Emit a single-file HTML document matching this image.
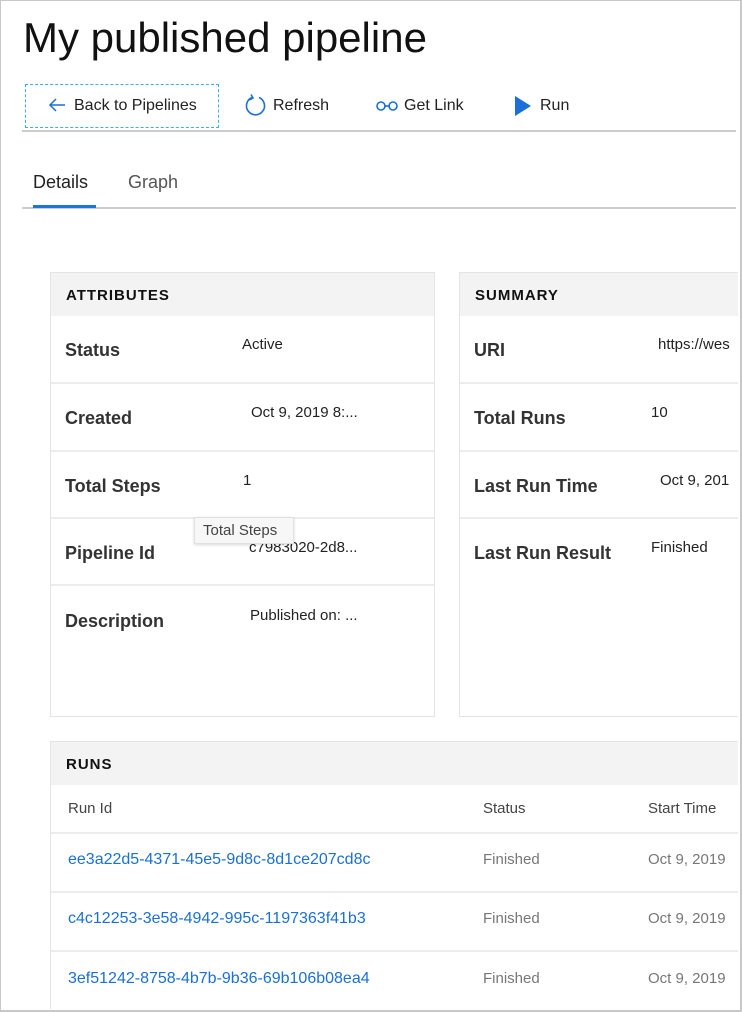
<!DOCTYPE html>
<html><head><meta charset="utf-8"><style>
*{margin:0;padding:0;box-sizing:border-box}
body{width:742px;height:1012px;overflow:hidden;background:#fff;font-family:"Liberation Sans",sans-serif;position:relative}
.a{position:absolute;white-space:nowrap}
.frame{position:absolute;left:0;top:0;width:742px;height:1012px;border:1px solid #c8c8c8;border-right:2px solid #c8c8c8;border-bottom:2px solid #c8c8c8}
.card{position:absolute;border:1px solid #e4e4e4;background:#fff}
.hd{position:absolute;left:0;right:0;top:0;height:43px;background:#f3f3f3;font-weight:bold;font-size:15px;letter-spacing:1px;color:#111;padding:14px 0 0 15px}
.sep{position:absolute;left:0;right:0;height:2px;background:#ececec}
.lbl{font-weight:bold;font-size:18px;color:#333}
.val{font-size:15px;color:#222}
.tb{font-size:16px;color:#222}
.lnk{font-size:16px;color:#1a6fd8}
.gr{font-size:15px;color:#777}
</style></head><body>
<div class="a" style="left:23px;top:14px;font-size:42px;color:#111">My published pipeline</div>

<div class="a" style="left:25px;top:84px;width:194px;height:44px;border:1px dashed #3ab0e8"></div>
<svg class="a" style="left:47px;top:97px" width="20" height="16" viewBox="0 0 20 16"><path d="M18 8H3M9 2L3 8l6 6" fill="none" stroke="#1a6fd8" stroke-width="1.5"/></svg>
<div class="a tb" style="left:74px;top:97px">Back to Pipelines</div>
<svg class="a" style="left:243px;top:93px" width="25" height="26" viewBox="0 0 25 26"><path d="M9 4.5A9 9 0 1 0 16 4.5" fill="none" stroke="#1a6fd8" stroke-width="1.6"/><path d="M8 1.5L10 5 6.5 7" fill="none" stroke="#1a6fd8" stroke-width="1.5"/></svg>
<div class="a tb" style="left:273px;top:97px">Refresh</div>
<svg class="a" style="left:375px;top:100px" width="25" height="12" viewBox="0 0 25 12"><circle cx="6" cy="6" r="4" fill="none" stroke="#1a6fd8" stroke-width="1.6"/><circle cx="18" cy="6" r="4" fill="none" stroke="#1a6fd8" stroke-width="1.6"/><path d="M9 6h6" stroke="#1a6fd8" stroke-width="1.6"/></svg>
<div class="a tb" style="left:404px;top:97px">Get Link</div>
<svg class="a" style="left:514px;top:95px" width="18" height="22" viewBox="0 0 18 22"><path d="M1 1L17 11 1 21z" fill="#1a6fd8"/></svg>
<div class="a tb" style="left:540px;top:97px">Run</div>
<div class="a" style="left:22px;top:130px;width:714px;height:2px;background:#ccc"></div>

<div class="a" style="left:33px;top:172px;font-size:18px;color:#222">Details</div>
<div class="a" style="left:128px;top:172px;font-size:18px;color:#555">Graph</div>
<div class="a" style="left:22px;top:207px;width:714px;height:2px;background:#ccc"></div>
<div class="a" style="left:33px;top:205px;width:63px;height:3px;background:#1a78d4"></div>

<div class="card" style="left:50px;top:272px;width:385px;height:445px">
<div class="hd">ATTRIBUTES</div>
<div class="sep" style="top:109px"></div><div class="sep" style="top:177px"></div><div class="sep" style="top:244px"></div><div class="sep" style="top:311px"></div>
<div class="a lbl" style="left:14px;top:67px">Status</div><div class="a val" style="left:191px;top:63px">Active</div>
<div class="a lbl" style="left:14px;top:135px">Created</div><div class="a val" style="left:200px;top:131px">Oct 9, 2019 8:...</div>
<div class="a lbl" style="left:14px;top:203px">Total Steps</div><div class="a val" style="left:192px;top:199px">1</div>
<div class="a lbl" style="left:14px;top:270px">Pipeline Id</div><div class="a val" style="left:198px;top:266px">c7983020-2d8...</div>
<div class="a lbl" style="left:14px;top:338px">Description</div><div class="a val" style="left:199px;top:334px">Published on: ...</div>
</div>
<div class="a" style="left:194px;top:517px;width:100px;height:27px;background:#f7f7f7;border:1px solid #e0e0e0;box-shadow:0 1px 3px rgba(0,0,0,.15);font-size:15px;color:#444;padding:4px 0 0 8px">Total Steps</div>

<div class="card" style="left:459px;top:272px;width:279px;height:445px;border-right:none;overflow:hidden">
<div class="hd">SUMMARY</div>
<div class="sep" style="top:109px"></div><div class="sep" style="top:177px"></div><div class="sep" style="top:244px"></div>
<div class="a lbl" style="left:14px;top:67px">URI</div><div class="a val" style="left:198px;top:63px">https://wes</div>
<div class="a lbl" style="left:14px;top:135px">Total Runs</div><div class="a val" style="left:191px;top:131px">10</div>
<div class="a lbl" style="left:14px;top:203px">Last Run Time</div><div class="a val" style="left:200px;top:199px">Oct 9, 201</div>
<div class="a lbl" style="left:14px;top:270px">Last Run Result</div><div class="a val" style="left:191px;top:266px">Finished</div>
</div>

<div class="card" style="left:50px;top:741px;width:688px;height:268px;border-right:none;border-bottom:none;overflow:hidden">
<div class="hd">RUNS</div>
<div class="sep" style="top:90px"></div><div class="sep" style="top:149px"></div><div class="sep" style="top:208px"></div>
<div class="a" style="left:17px;top:58px;font-size:15px;color:#444">Run Id</div>
<div class="a" style="left:432px;top:58px;font-size:15px;color:#444">Status</div>
<div class="a" style="left:597px;top:58px;font-size:15px;color:#444">Start Time</div>
<div class="a lnk" style="left:17px;top:109px">ee3a22d5-4371-45e5-9d8c-8d1ce207cd8c</div><div class="a gr" style="left:432px;top:109px">Finished</div><div class="a gr" style="left:597px;top:109px">Oct 9, 2019</div>
<div class="a lnk" style="left:17px;top:168px">c4c12253-3e58-4942-995c-1197363f41b3</div><div class="a gr" style="left:432px;top:168px">Finished</div><div class="a gr" style="left:597px;top:168px">Oct 9, 2019</div>
<div class="a lnk" style="left:17px;top:228px">3ef51242-8758-4b7b-9b36-69b106b08ea4</div><div class="a gr" style="left:432px;top:228px">Finished</div><div class="a gr" style="left:597px;top:228px">Oct 9, 2019</div>
</div>
<div class="frame"></div>
</body></html>
